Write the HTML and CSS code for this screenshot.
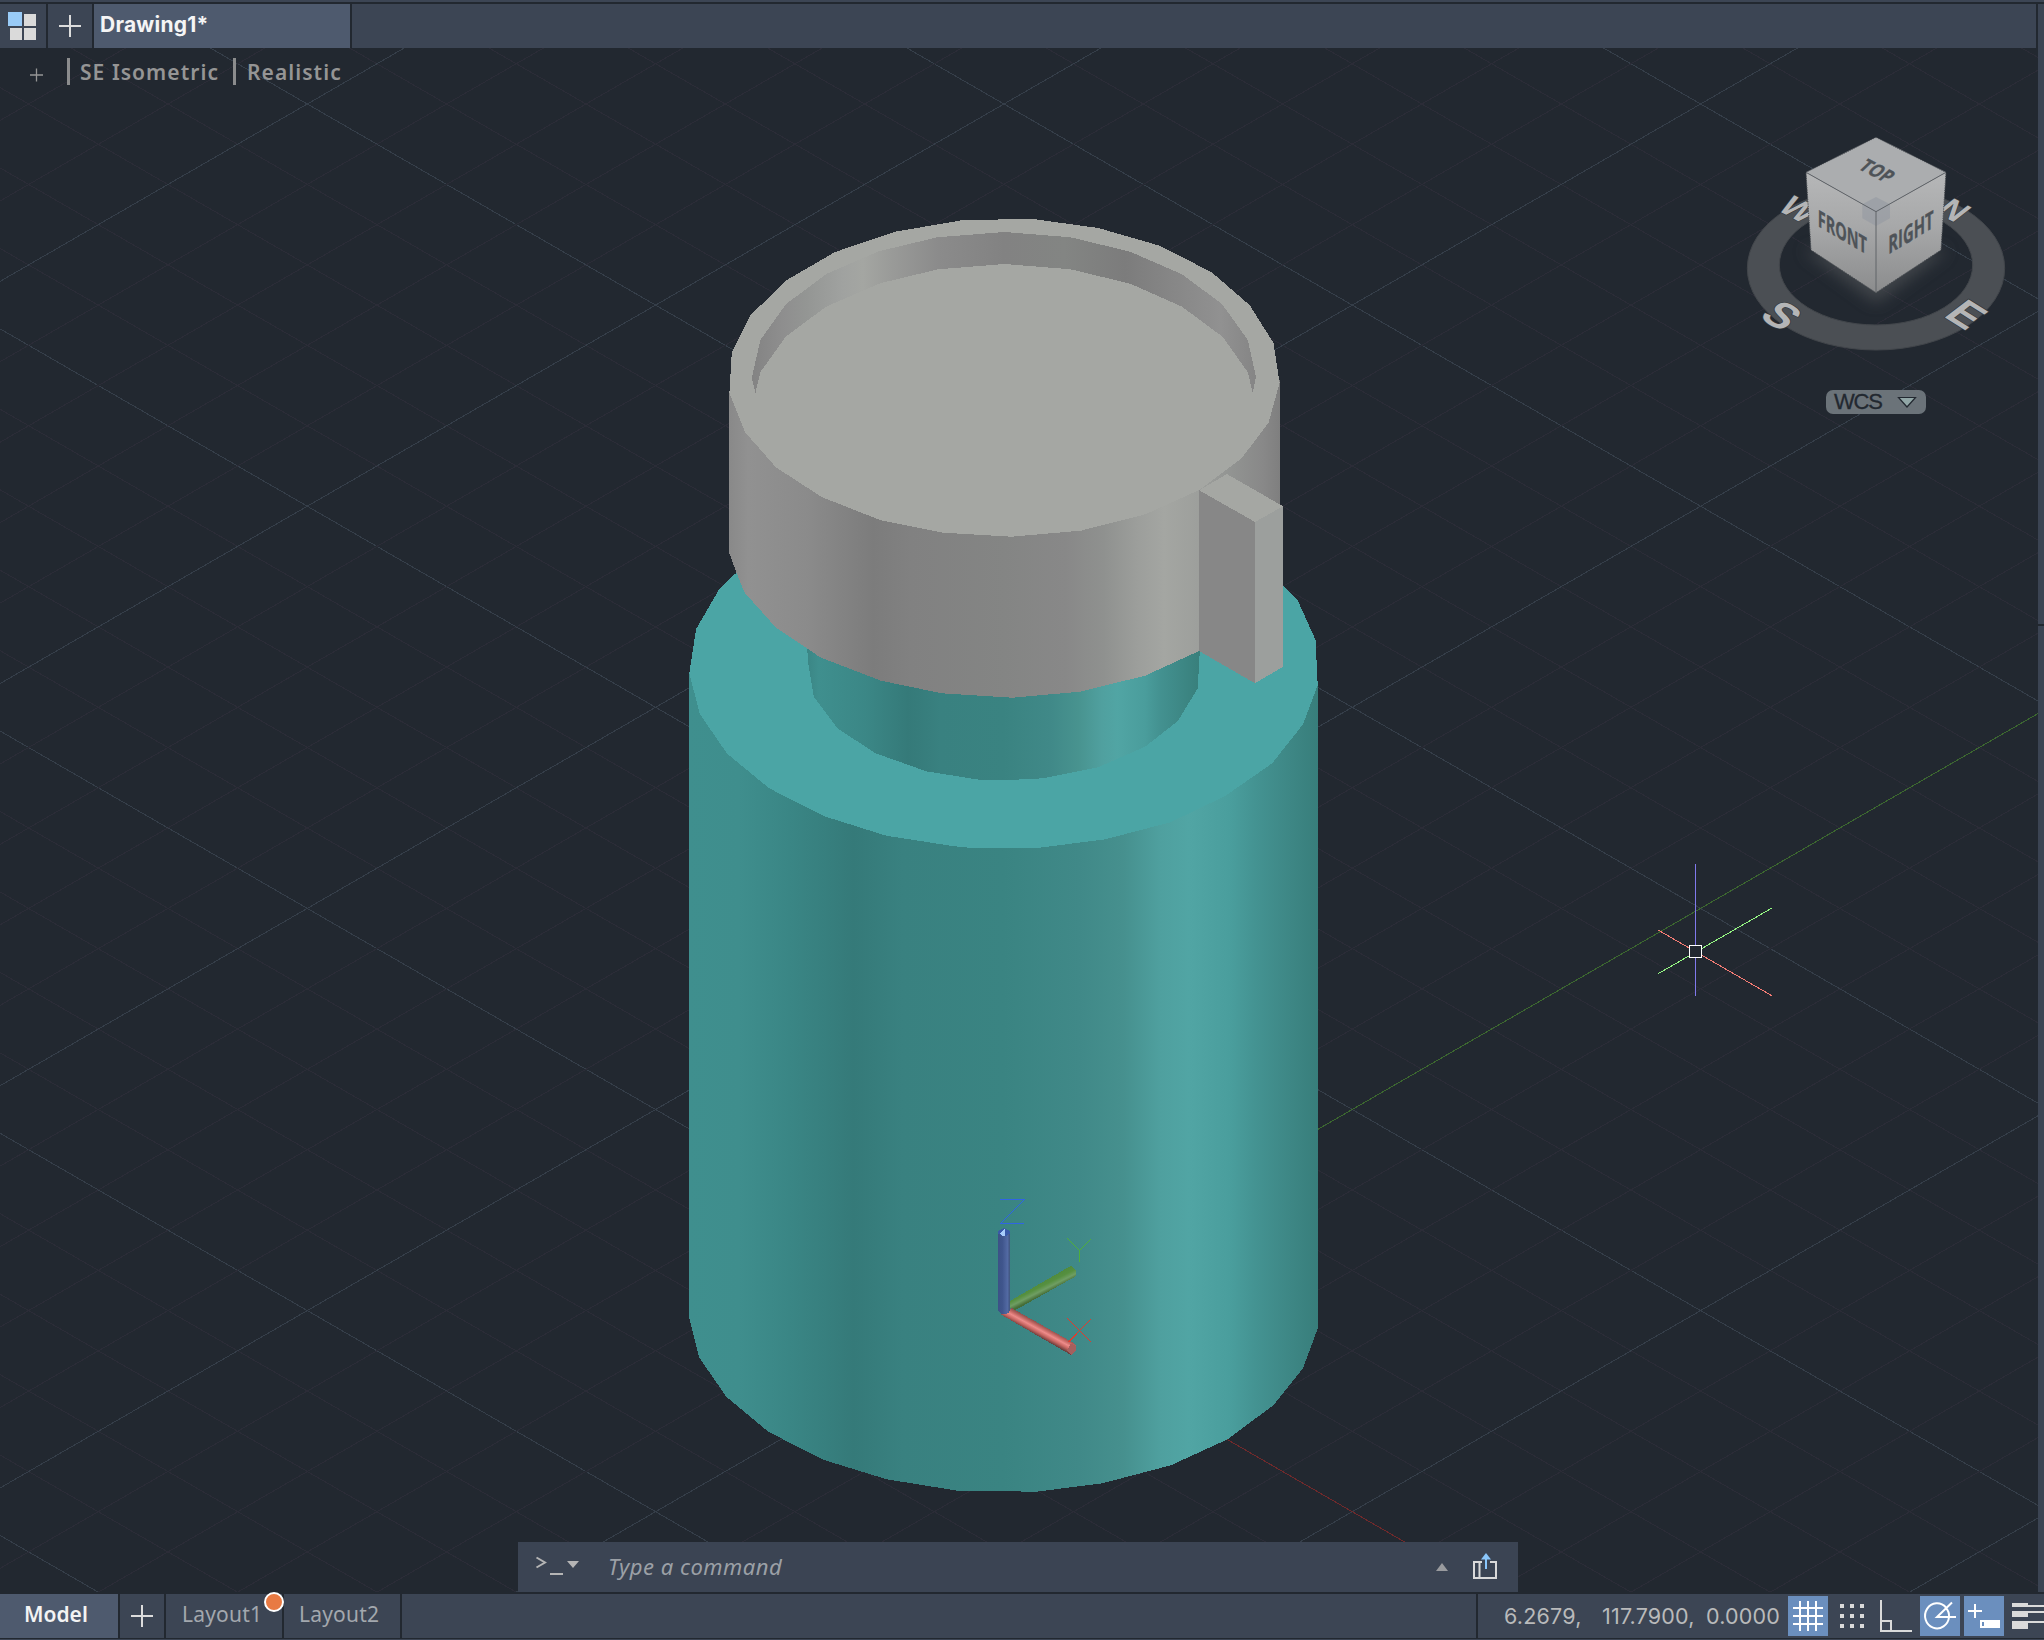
FILE: index.html
```html
<!DOCTYPE html>
<html lang="en">
<head>
<meta charset="utf-8">
<title>Drawing1</title>
<link rel="stylesheet" href="styles.css">
</head>
<body>
<div class="app">
  <div class="edge"></div>
  <div class="workspace">
    <div class="document">
      <nav class="tabs">
        <div class="tab start">
          <svg width="46" height="44"><path fill="#99cbf7" d="M8 8h14v14H8z"/><path fill="#dadada" d="M24 10h12v12H24zM10 24h12v12H10zM24 24h12v12H24z"/></svg>
        </div>
        <div class="tab plus"><svg width="44" height="44"><path d="M11 22h22M22 11v22" stroke="#dcdcdc" stroke-width="2"/></svg></div>
        <div class="tab file active"><span>Drawing1*</span></div>
        <div class="tab rest"></div>
      </nav>
      <main class="viewport">
        <svg class="scene" width="2038" height="1544" viewBox="0 48 2038 1544">
          <defs>
            <g id="down" fill="none">
              <path class="minor" d="M0 811.4l2100 1212.4M0 891.9l2100 1212.4M0 972.3l2100 1212.4M0 1052.8l2100 1212.4"/>
              <path class="major" d="M0 731l2100 1212.4"/>
            </g>
            <g id="up" fill="none">
              <path class="minor" d="M0 1970.6l2100 -1212.4M0 2051.1l2100 -1212.4M0 2131.5l2100 -1212.4M0 2212l2100 -1212.4"/>
              <path class="major" d="M0 1890.2l2100 -1212.4"/>
            </g>
            <linearGradient id="body" gradientUnits="userSpaceOnUse" x1="689" y1="0" x2="1318" y2="0">
              <stop offset="0" stop-color="#3f8f8e"/><stop offset=".08" stop-color="#3f8e8d"/><stop offset=".16" stop-color="#3a8685"/><stop offset=".262" stop-color="#357a79"/><stop offset=".34" stop-color="#398180"/><stop offset=".5" stop-color="#3a8482"/><stop offset=".62" stop-color="#408988"/><stop offset=".69" stop-color="#46908e"/><stop offset=".75" stop-color="#4fa09f"/><stop offset=".795" stop-color="#51a5a4"/><stop offset=".86" stop-color="#4a9e9d"/><stop offset=".9" stop-color="#449392"/><stop offset=".96" stop-color="#3d8684"/><stop offset="1" stop-color="#387e7b"/>
            </linearGradient>
            <linearGradient id="neck" gradientUnits="userSpaceOnUse" x1="807" y1="0" x2="1200" y2="0">
              <stop offset="0" stop-color="#3b8685"/><stop offset=".03" stop-color="#3f8f8e"/><stop offset=".15" stop-color="#3b8786"/><stop offset=".257" stop-color="#357a79"/><stop offset=".34" stop-color="#398180"/><stop offset=".5" stop-color="#3a8381"/><stop offset=".62" stop-color="#408988"/><stop offset=".69" stop-color="#48938f"/><stop offset=".75" stop-color="#50a09f"/><stop offset=".79" stop-color="#51a5a4"/><stop offset=".86" stop-color="#4a9d9c"/><stop offset=".9" stop-color="#439190"/><stop offset="1" stop-color="#387f7b"/>
            </linearGradient>
            <linearGradient id="cap" gradientUnits="userSpaceOnUse" x1="729" y1="0" x2="1280" y2="0">
              <stop offset="0" stop-color="#898989"/><stop offset=".035" stop-color="#919191"/><stop offset=".14" stop-color="#8b8b8b"/><stop offset=".262" stop-color="#7c7c7c"/><stop offset=".33" stop-color="#818181"/><stop offset=".5" stop-color="#848584"/><stop offset=".61" stop-color="#888888"/><stop offset=".68" stop-color="#8f918f"/><stop offset=".74" stop-color="#9c9e9b"/><stop offset=".79" stop-color="#a4a6a2"/><stop offset=".86" stop-color="#9c9e9b"/><stop offset=".91" stop-color="#929492"/><stop offset=".97" stop-color="#888888"/><stop offset="1" stop-color="#7f7f7f"/>
            </linearGradient>
            <linearGradient id="recess" gradientUnits="userSpaceOnUse" x1="752" y1="0" x2="1256" y2="0">
              <stop offset="0" stop-color="#838383"/><stop offset=".06" stop-color="#8e8e8e"/><stop offset=".11" stop-color="#949694"/><stop offset=".18" stop-color="#a0a2a0"/><stop offset=".22" stop-color="#a4a6a2"/><stop offset=".28" stop-color="#999a98"/><stop offset=".37" stop-color="#8b8b8b"/><stop offset=".5" stop-color="#828282"/><stop offset=".62" stop-color="#838583"/><stop offset=".74" stop-color="#7c7c7c"/><stop offset=".83" stop-color="#868686"/><stop offset=".93" stop-color="#919191"/><stop offset="1" stop-color="#858585"/>
            </linearGradient>
            <linearGradient id="axisZ" x1="0" x2="1" y1="0" y2="0"><stop offset="0" stop-color="#3c5287"/><stop offset=".35" stop-color="#3f558c"/><stop offset=".8" stop-color="#536aa3"/><stop offset="1" stop-color="#41567f"/></linearGradient>
            <linearGradient id="axisY" gradientUnits="userSpaceOnUse" x1="1038" y1="1282" x2="1044" y2="1294"><stop offset="0" stop-color="#4f8a3d"/><stop offset=".4" stop-color="#56903f"/><stop offset=".7" stop-color="#6f9e63"/><stop offset="1" stop-color="#466e38"/></linearGradient>
            <linearGradient id="axisX" gradientUnits="userSpaceOnUse" x1="1042" y1="1324" x2="1036" y2="1335"><stop offset="0" stop-color="#7c4a46"/><stop offset=".3" stop-color="#c96a66"/><stop offset=".5" stop-color="#ee8c8a"/><stop offset=".75" stop-color="#c56460"/><stop offset="1" stop-color="#6b403e"/></linearGradient>
          </defs>
          <g class="grid">
            <use href="#down" y="-2011"/><use href="#down" y="-1608.8"/><use href="#down" y="-1206.6"/><use href="#down" y="-804.4"/><use href="#down" y="-402.2"/><use href="#down"/><use href="#down" y="402.2"/><use href="#down" y="804.4"/>
            <use href="#up" y="-2011"/><use href="#up" y="-1608.8"/><use href="#up" y="-1206.6"/><use href="#up" y="-804.4"/><use href="#up" y="-402.2"/><use href="#up"/><use href="#up" y="402.2"/><use href="#up" y="804.4"/>
            <path d="M1003.9 1310.6L2103.9 675.5" stroke="#3c682f"/>
            <path d="M1003.9 1310.6l700 404.1" stroke="#70292b"/>
          </g>
          <g shape-rendering="crispEdges">
            <path fill="url(#body)" d="M689 673V1316.7L699.3 1357.7L726.3 1396.7L768.7 1432L823.9 1460L886.7 1479.3L957.5 1490.7L1008 1491L1034 1492L1102.4 1483.3L1170.8 1465.3L1227.5 1439.3L1273.7 1405L1303 1368.3L1318 1327.7V685z"/>
            <path fill="#4ba5a5" d="M689.3 673.3L696 629.3L719.1 589.3L736.4 572.7L900 500H1200L1283.2 586L1297.5 600L1315.6 640L1317.7 685L1303 724.3L1272.2 763.3L1225.1 796L1170.4 822.3L1105.1 839.3L1039.9 847.7L972.5 848L954.4 846.3L886.2 835.7L824.4 816.3L769.2 788.3L727.1 753.7L699.8 714z"/>
            <path fill="url(#neck)" d="M807.1 640V648.3L808.4 664L813.8 696.7L837.8 728.7L875.7 753.3L926.2 771.3L978.8 779.7H1014.6L1042.8 778.3L1098 767.3L1145.1 746.7L1177.9 721L1197.7 688.3L1199.8 651V600H807z"/>
            <path fill="url(#cap)" d="M729.2 392V552.7L736.4 572.7L744.4 592.3L776 627.7L820.2 657.3L880.8 680.7L941.8 693.3L1012.5 697.7L1079.9 691.7L1145.1 675.7L1199 651V510H1280V380z"/>
            <path fill="#a5a7a3" d="M961.6 220.3L1020.8 219H1033L1098.4 228L1159.6 245.7L1211.8 272.3L1249.8 305.3L1273.5 343L1279.6 382.7L1268.6 422.7L1241.6 458.3L1199.2 490L1145.3 514.3L1080.8 530.7L1011.4 536.7L943.3 532.7L880 520L821.6 497L775.9 467.3L744.9 432L729.4 392.7L731.8 352.3L750.6 315L787.3 279.7L835.1 252L895.1 231.7z"/>
            <path fill="url(#recess)" d="M751.8 377.7L760.4 340L786.1 304L826.9 273.7L878.8 251.3L937.1 237.3L1004.5 232L1070.6 237.3L1130.2 251.7L1182 274.3L1222 304L1247.8 340L1255.9 376.7L1252.7 392.7L1247.8 372.3L1222.9 337L1182 306.7L1130.2 283.7L1070.6 269.3L1004.5 264L938 269.3L880 283.3L826.1 306.7L786.1 336.3L760.4 372L755.5 392.7z"/>
            <path fill="#878787" d="M1199 490L1255 522V683.3L1199 651z"/>
            <path fill="#9c9f9d" d="M1255 522L1283 506.3V666.7L1255 683.3z"/>
            <path fill="#a5a7a3" d="M1199.2 490.3L1226.9 474L1283 506.3L1255 522z"/>
          </g>
          <g shape-rendering="crispEdges">
            <path fill="url(#axisY)" d="M1010 1301L1071 1265.7L1075.7 1270V1276.3L1015 1310.3L1010 1308.3z"/>
            <path fill="url(#axisX)" d="M1000 1314L1011.7 1308L1072.3 1342.3L1076 1345V1350.7L1071 1355z"/>
            <path fill="#a5605e" d="M1067 1351L1071 1343.5L1076 1346V1350.7L1071 1355z"/>
            <path fill="url(#axisZ)" d="M998.3 1232h11.5v78.5q-1 3.5-5.7 3.5t-5.8-3.5z"/>
            <path fill="#3a5aa8" d="M998.3 1233.5V1231L1004 1228L1009.8 1231V1233.5L1006 1236H1002z"/>
            <path fill="#a9cdfa" d="M1000 1233L1004.5 1229L1005 1236H1002z"/>
          </g>
          <g fill="none" shape-rendering="crispEdges">
            <path stroke="#2f65e4" d="M1000 1199.5h24.7L1000.3 1223.5H1024"/>
            <path stroke="#4fae3c" d="M1067 1238l12.5 12.3L1091 1239M1079.5 1250v12"/>
            <path stroke="#e03c2e" d="M1067 1317.7l24 24.3M1091 1319l-22.5 23"/>
            <path stroke="#8079ec" d="M1695.500 864v132"/>
            <path stroke="#f57c74" d="M1658 930L1772 995.8"/>
            <path stroke="#95f783" d="M1658 973.8L1772 908"/>
            <path stroke="#fff" fill="#222830" d="M1689.500 945.500h12v12h-12z"/>
          </g>
        </svg>

        <svg class="viewcube" width="324" height="270" viewBox="0 0 972 810">
          <defs>
            <linearGradient id="face" x1="0" y1="0" x2="0" y2="1"><stop offset="0" stop-color="#b6b7b8"/><stop offset=".45" stop-color="#a7a8a9"/><stop offset="1" stop-color="#8b8c8d"/></linearGradient>
            <filter id="glow" x="-50%" y="-50%" width="200%" height="200%"><feGaussianBlur stdDeviation="22"/></filter>
          </defs>
          <path class="ring" fill-rule="evenodd" d="M82 475a386 245 0 1 0 772 0a386 245 0 1 0 -772 0zM178 465a290 180 0 1 0 580 0a290 180 0 1 0 -580 0z"/>
          <path d="M250 420L468 580L686 420z" fill="#55585b" opacity=".6" filter="url(#glow)"/>
          <g class="compass">
            <text transform="matrix(1.18 .74 -1.12 .86 744 610)" y="36">E</text>
            <text transform="matrix(1.18 .74 -1.12 .86 190 613)" y="36">S</text>
            <text transform="matrix(.95 .5 -.86 .68 240 296)" y="36">W</text>
            <text transform="matrix(.95 .5 -.86 .68 705 297)" y="36">N</text>
          </g>
          <path fill="url(#face)" d="M258 187L468 305V548L273 420z"/>
          <path fill="url(#face)" d="M678 187L468 305V548L663 420z"/>
          <path fill="#abadaf" d="M468 82L678 187L468 305L258 187z"/>
          <path class="corner" d="M468 261L510 283V325L468 348L427 325V283z"/>
          <path class="outline" d="M468 82L678 187L663 420L468 548L273 420L258 187z"/>
          <path class="crease" d="M258 187L468 305L678 187M468 305V548"/>
          <g class="facename">
            <text transform="matrix(.87 .45 -.68 .64 471 183)" font-size="66" y="23" textLength="100" lengthAdjust="spacingAndGlyphs">TOP</text>
            <text transform="matrix(1 .58 0 1 367 366)" font-size="70" y="25" textLength="148" lengthAdjust="spacingAndGlyphs">FRONT</text>
            <text transform="matrix(1 -.6 0 1 573 367)" font-size="74" y="26" textLength="136" lengthAdjust="spacingAndGlyphs">RIGHT</text>
          </g>
        </svg>
        <div class="wcs"><span>WCS</span><svg width="20" height="12"><path d="M1.500 1.500h17L10 11z" fill="#91a6a6" stroke="#222830" stroke-width="1.200"/></svg></div>

        <div class="viewlabels">
          <svg class="viewplus" width="14" height="14"><path d="M0 7h13M6.500 .5v13" stroke="#959595" stroke-width="1.300"/></svg>
          <i></i><span class="direction">SE Isometric</span>
          <i></i><span class="style">Realistic</span>
        </div>
        <div class="command">
          <svg width="90" height="50"><path d="M18.500 15.500l8.500 5-8.500 5" fill="none" stroke="#b5b5b5" stroke-width="2"/><path d="M32 31h13v2H32z" fill="#b5b5b5"/><path d="M49 19h12l-6 7z" fill="#b5b5b5"/></svg>
          <span class="prompt">Type a command</span>
          <svg width="120" height="50"><path d="M38 29h12l-6-8z" fill="#999b9e"/><path d="M84 20H76V36H98V20H92M81.500 20v16" fill="none" stroke="#dadada" stroke-width="2"/><path d="M88 14v13" stroke="#8ac6fb" stroke-width="2"/><path d="M83 17.500h10L88 11z" fill="#8ac6fb"/></svg>
        </div>
      </main>
    </div>
    <aside class="side"><div></div><div></div></aside>
  </div>
  <footer class="status">
    <div class="cell model active"><span>Model</span></div>
    <div class="cell add"><svg width="44" height="44"><path d="M11 22h22M22 11v22" stroke="#dcdcdc" stroke-width="2"/></svg></div>
    <div class="cell layout"><span>Layout1</span><b class="dot"></b></div>
    <div class="cell layout second"><span>Layout2</span></div>
    <div class="cell fill"></div>
    <div class="cell tools">
      <div class="coords"><span class="cx">6.2679,</span><span class="cy">117.7900,</span><span class="cz">0.0000</span></div>
      <div class="tool on"><svg width="40" height="40"><path d="M12 5v30M20 5v30M28 5v30M5 12h30M5 20h30M5 28h30" stroke="#fff" stroke-width="2"/></svg></div>
      <div class="tool"><svg width="40" height="40"><path fill="#dadada" d="M8 8h4v4H8zM18 8h4v4h-4zM28 8h4v4h-4zM8 18h4v4H8zM18 18h4v4h-4zM28 18h4v4h-4zM8 28h4v4H8zM18 28h4v4h-4zM28 28h4v4h-4z"/></svg></div>
      <div class="tool"><svg width="40" height="40"><path fill="none" stroke="#dadada" stroke-width="2" d="M5 4v31h31M5 25h10v10"/></svg></div>
      <div class="tool on"><svg width="40" height="40"><path fill="none" stroke="#fff" stroke-width="2" d="M26 11.500A12 12.500 0 1 0 29 21H17L32 6.500M36 21H29A12 12 0 0 0 26 12"/></svg></div>
      <div class="tool on"><svg width="40" height="40"><path d="M4 15h14M11 8v14" stroke="#fff" stroke-width="2"/><path fill="#fff" fill-rule="evenodd" d="M16 24h20v8H16zM18 26v4h2v-4z"/></svg></div>
      <div class="tool last"><svg width="36" height="40"><path fill="#dadada" d="M4 7h16v2h16v2H4zM4 15h32v2H20v4H4zM4 25h32v2H20v6H4z"/></svg></div>
    </div>
  </footer>
  <div class="base"></div>
</div>
</body>
</html>
```

FILE: styles.css
```css
* { box-sizing: border-box; }
html, body { margin: 0; background: #222830; }
body { overflow: hidden; font-family: "Noto Sans", "Open Sans", sans-serif; }
svg { display: block; flex: none; }

.app {
  width: 2044px;
  height: 1640px;
  display: flex;
  flex-direction: column;
  background: #222830;
}
.edge { height: 2px; background: #3c4554; margin-bottom: 2px; }
.workspace { height: 1588px; display: flex; gap: 2px; margin-bottom: 2px; }
.document { width: 2036px; display: flex; flex-direction: column; }
.side { width: 6px; display: grid; grid-template-rows: 620px 1fr; gap: 2px; }
.side div { background: #3b4453; }

.tabs { height: 44px; display: flex; gap: 2px; }
.tab { background: #3c4554; }
.start { width: 46px; }
.plus { width: 44px; }
.file {
  width: 256px;
  padding: 8px 0 0 6px;
  font: 700 21px/26px Inter, sans-serif;
  letter-spacing: 0.25px;
  color: #f5f5f5;
}
.rest { flex: 1; }
.active { background: #4e5a6e; }

.viewport {
  position: relative;
  height: 1544px;
  width: 2038px;
  display: flex;
  flex-direction: column;
  justify-content: space-between;
}
.scene { position: absolute; left: 0; top: 0; }
.grid { shape-rendering: crispEdges; }
.minor { stroke: #2b2c37; }
.major { stroke: #353e49; }

.viewcube { position: absolute; left: 1720px; top: 62px; }
.ring { fill: #4b4f54; stroke: #42464b; stroke-width: 3; }
.compass text {
  font: 700 92px "Liberation Sans", sans-serif;
  text-anchor: middle;
  fill: #b4b5b6;
  stroke: #33383d;
  stroke-width: 3;
  paint-order: stroke;
}
.corner { fill: #9499a2; opacity: .6; }
.outline, .crease { fill: none; stroke: #4a4e53; stroke-width: 3; stroke-dasharray: 4 3; }
.crease { stroke-width: 3; stroke-dasharray: none; stroke: #606469; }
.facename text {
  font-family: "Open Sans", sans-serif;
  font-weight: 700;
  text-anchor: middle;
  fill: #4e5358;
  stroke: #4e5358;
  stroke-width: 1;
}

.wcs {
  position: absolute;
  left: 1826px;
  top: 342px;
  width: 100px;
  height: 24px;
  padding: 0 9px 0 8px;
  border-radius: 7px;
  background: #6b7379;
  display: flex;
  align-items: center;
  justify-content: space-between;
  font: 22px/24px "Liberation Sans", sans-serif;
  letter-spacing: -1.2px;
  color: #222830;
  -webkit-text-stroke: 0.3px #222830;
}

.viewlabels {
  position: relative;
  height: 50px;
  padding: 10px 0 0 30px;
  display: flex;
  font-size: 21px;
  line-height: 29px;
  font-weight: 600;
  letter-spacing: 1.05px;
  color: #959595;
}
.viewlabels i { width: 3px; height: 27px; background: #8b8c8d; }
.viewplus { margin: 10px 23px 0 0; }
.direction { width: 153px; margin-left: 10px; }
.style { margin-left: 11px; }

.command {
  position: relative;
  width: 1000px;
  height: 50px;
  margin-left: 518px;
  display: flex;
  background: #3b4453;
}
.prompt {
  flex: 1;
  font: italic 22px/48px "Noto Sans", sans-serif;
  letter-spacing: 0.5px;
  color: #9ba0a6;
}

.status { height: 44px; display: flex; gap: 2px; }
.cell { background: #3c4554; height: 44px; font-size: 21px; line-height: 40px; }
.cell.active { background: #4e5a6e; }
.model { width: 118px; padding-left: 24px; font-weight: 600; color: #f3f3f3; }
.add { width: 44px; }
.layout { width: 116px; padding-left: 16px; letter-spacing: 0.2px; color: #a3a8ae; position: relative; }
.second { padding-left: 15px; }
.dot {
  position: absolute;
  z-index: 1;
  left: 98px;
  top: -2px;
  width: 20px;
  height: 20px;
  border-radius: 50%;
  border: 2px solid #fff;
  background: #e87a43;
}
.fill { flex: 1; }
.tools { width: 566px; display: flex; gap: 4px; padding-top: 2px; }
.coords {
  width: 306px;
  padding-left: 26px;
  display: flex;
  font: 21.5px/41px Inter, sans-serif;
  letter-spacing: 0.2px;
  color: #b9babb;
}
.cx { width: 98px; }
.cy { width: 104px; }
.tool { width: 40px; height: 40px; }
.on { background: #6b8fbe; }
.last { width: 36px; }
.base { height: 1px; background: #3c4554; margin-top: 1px; }
```
